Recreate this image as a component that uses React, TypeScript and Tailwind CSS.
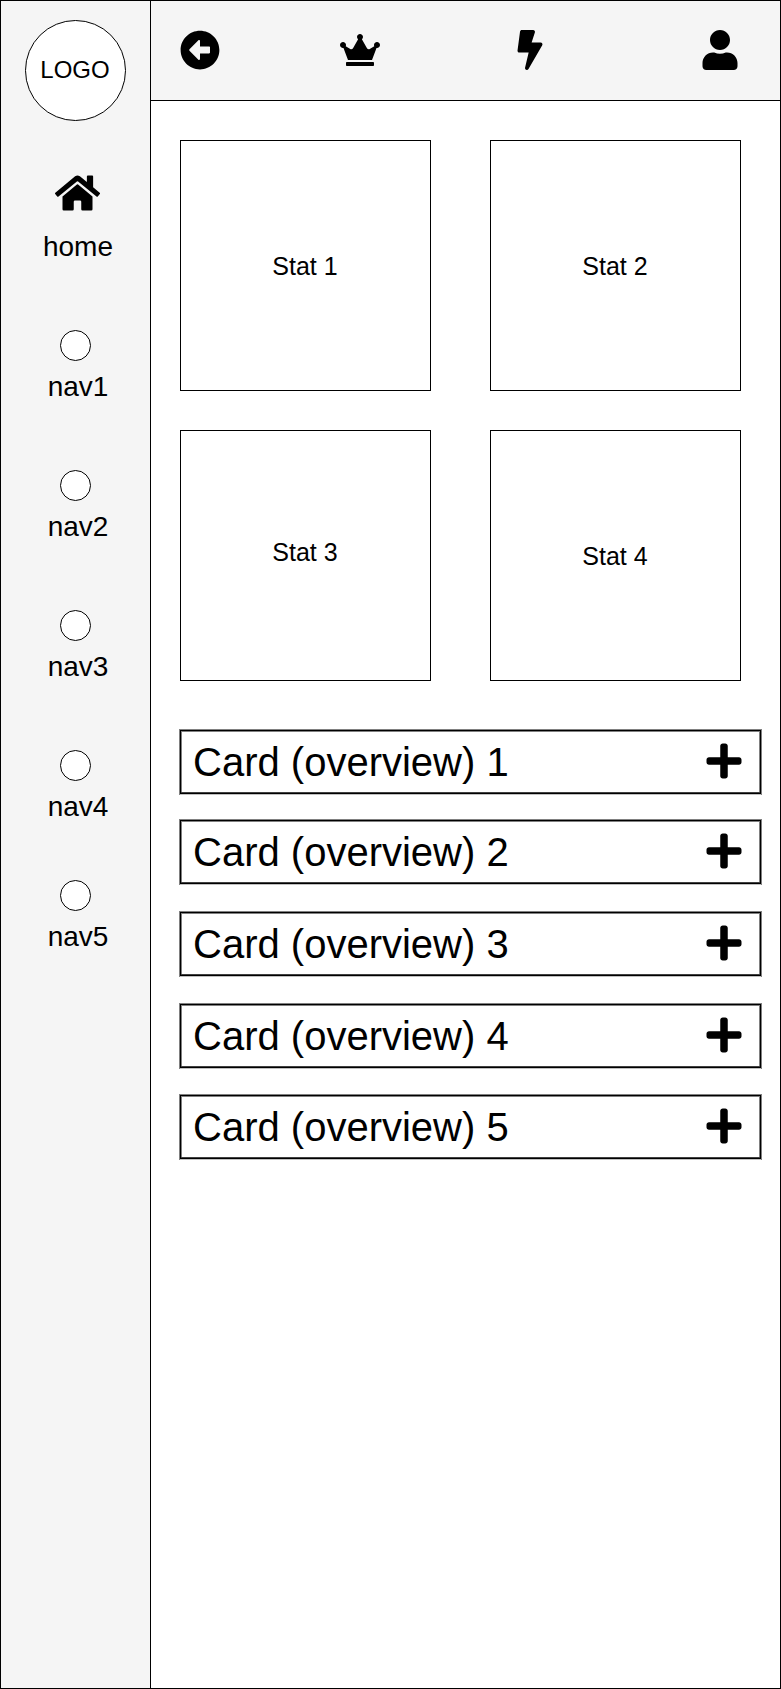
import { FaArrowAltCircleLeft, FaBolt, FaCrown, FaHome, FaPlus, FaUser } from "react-icons/fa";

const navItems = [
  { label: "nav1", spacing: "mt-[67px]" },
  { label: "nav2", spacing: "mt-[68px]" },
  { label: "nav3", spacing: "mt-[68px]" },
  { label: "nav4", spacing: "mt-[68px]" },
  { label: "nav5", spacing: "mt-[58px]" },
];

const stats = [
  { label: "Stat 1", shift: "" },
  { label: "Stat 2", shift: "" },
  { label: "Stat 3", shift: "pb-[7px]" },
  { label: "Stat 4", shift: "pt-px" },
];

const cards = [
  { label: "Card (overview) 1", spacing: "mt-[49px]" },
  { label: "Card (overview) 2", spacing: "mt-[26px]" },
  { label: "Card (overview) 3", spacing: "mt-[28px]" },
  { label: "Card (overview) 4", spacing: "mt-[28px]" },
  { label: "Card (overview) 5", spacing: "mt-[27px]" },
];

function Sidebar() {
  return (
    <aside className="flex w-[150px] shrink-0 flex-col items-center border-r border-black bg-[#f5f5f5]">
      <div className="mt-[19px] flex size-[101px] shrink-0 items-center justify-center rounded-full border border-black bg-white pr-px pb-0.5 text-[24px] leading-none">
        LOGO
      </div>
      <a className="mt-[52px] flex flex-col items-center pl-[5px]">
        <FaHome className="h-10 w-[45px]" />
        <span className="mt-[18px] text-[28px] leading-8">home</span>
      </a>
      <nav className="flex flex-col items-center">
        {navItems.map((item) => (
          <a key={item.label} className={`flex flex-col items-center ${item.spacing}`}>
            <span className="size-[31px] rounded-full border border-black bg-white" />
            <span className="mt-[10px] pl-[5px] text-[28px] leading-[31px]">{item.label}</span>
          </a>
        ))}
      </nav>
    </aside>
  );
}

function Header() {
  return (
    <header className="flex h-[100px] items-center border-b border-black bg-[#f5f5f5] pb-px pl-[29px]">
      <FaArrowAltCircleLeft className="size-10" />
      <FaCrown className="ml-[120px] h-8 w-10" />
      <FaBolt className="ml-[137px] h-10 w-[26px]" />
      <FaUser className="ml-[159px] h-10 w-9" />
    </header>
  );
}

export default function App() {
  return (
    <div className="flex h-[1689px] w-[781px] border border-black bg-white font-['Liberation_Sans',sans-serif] text-black">
      <Sidebar />
      <div className="min-w-0 flex-1">
        <Header />
        <main className="pt-[39px] pl-[29px]">
          <section className="grid grid-cols-[251px_251px] gap-x-[59px] gap-y-[39px]">
            {stats.map((stat) => (
              <div
                key={stat.label}
                className={`flex h-[251px] items-center justify-center border border-black pr-px text-[25px] leading-7 ${stat.shift}`}
              >
                {stat.label}
              </div>
            ))}
          </section>
          <section className="flex flex-col">
            {cards.map((card) => (
              <div
                key={card.label}
                className={`flex h-16 w-[581px] items-center justify-between border border-black pr-[18px] pl-[12px] shadow-[0_1px_0_0_#c0c0c0,0_0_0_1px_#808080,inset_0_-1px_0_0_#404040,inset_0_0_0_1px_#808080] ${card.spacing}`}
              >
                <span className="text-[40px] leading-[46px]">{card.label}</span>
                <FaPlus className="mb-0.5 h-10 w-9" />
              </div>
            ))}
          </section>
        </main>
      </div>
    </div>
  );
}
